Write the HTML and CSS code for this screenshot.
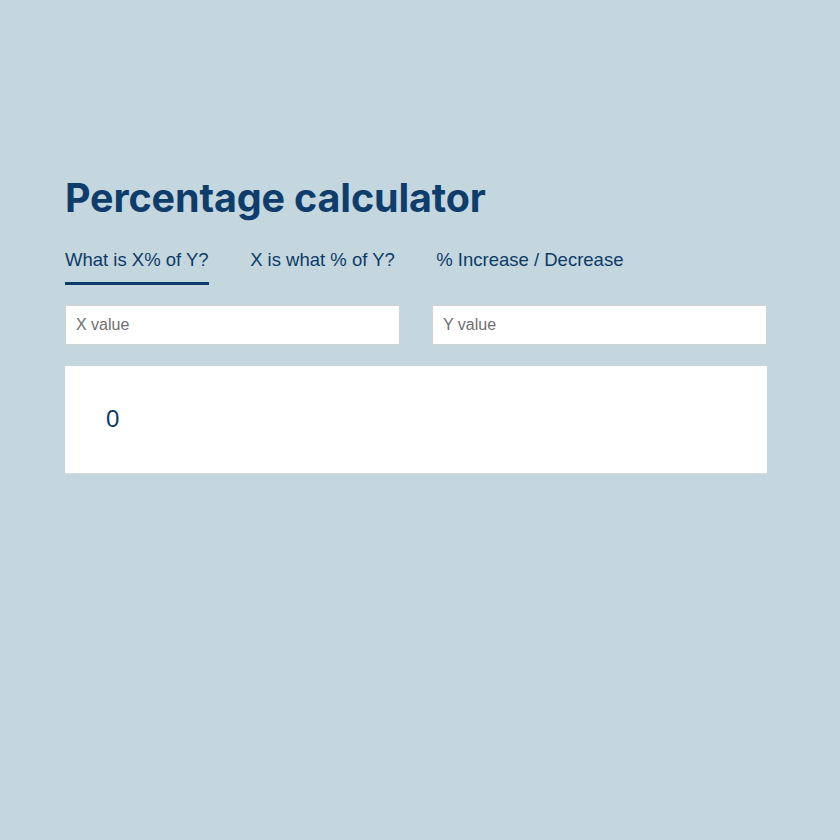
FILE: index.html
```html
<!DOCTYPE html>
<html>
<head>
<meta charset="utf-8">
<link rel="stylesheet" href="styles.css">
</head>
<body>
<div class="page">
  <h1 class="title">Percentage calculator</h1>
  <nav class="tabs">
    <span class="tab active">What is X% of Y?</span>
    <span class="tab">X is what % of Y?</span>
    <span class="tab">% Increase / Decrease</span>
  </nav>
  <div class="inputs">
    <input class="field" type="text" placeholder="X value">
    <input class="field" type="text" placeholder="Y value">
  </div>
  <div class="result">0</div>
</div>
</body>
</html>
```
FILE: styles.css
```css
html, body {
  margin: 0;
  padding: 0;
  background: #c4d7df;
}
.page {
  width: 702px;
  padding: 175px 0 0 65px;
  font-family: "Liberation Sans", Arial, sans-serif;
  color: #0d3b66;
}
.title {
  margin: 0;
  font-family: Inter, "Liberation Sans", sans-serif;
  font-weight: 700;
  font-size: 39.5px;
  line-height: 46px;
  letter-spacing: -0.15px;
  color: #0f3d6b;
}
.tabs {
  display: flex;
  gap: 41.5px;
  margin-top: 28px;
}
.tab {
  font-size: 18.5px;
  line-height: 22px;
  padding-bottom: 11px;
  border-bottom: 3px solid transparent;
}
.tab.active {
  border-bottom-color: #0f3d6b;
}
.inputs {
  display: flex;
  gap: 32px;
  margin-top: 20px;
}
.field {
  flex: 1;
  box-sizing: border-box;
  height: 40px;
  margin: 0;
  padding: 0 10px;
  border: 1px solid #cfd3d5;
  background: #fff;
  font-family: "Liberation Sans", Arial, sans-serif;
  font-size: 16px;
  color: #333;
  outline: none;
}
.field::placeholder {
  color: #707070;
}
.result {
  margin-top: 21px;
  box-sizing: border-box;
  height: 108px;
  padding: 39px 41px 0;
  background: #fff;
  border-bottom: 1px solid #d6dcdf;
  font-size: 24px;
  line-height: 28px;
  color: #0d3b66;
}
```
